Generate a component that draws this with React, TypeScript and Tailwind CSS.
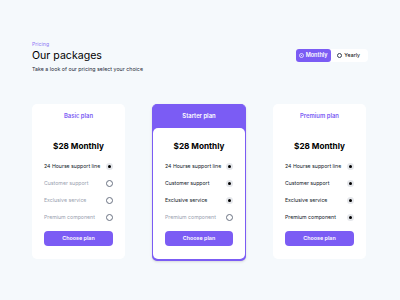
import React from "react";

type Plan = {
  name: string;
  active: boolean[];
  featured?: boolean;
};

const features = [
  "24 Hourse support line",
  "Customer support",
  "Exclusive service",
  "Premium component",
];

const plans: Plan[] = [
  { name: "Basic plan", active: [true, false, false, false] },
  { name: "Starter plan", active: [true, true, true, false], featured: true },
  { name: "Premium plan", active: [true, true, true, true] },
];

function Radio({ on }: { on: boolean }) {
  if (on) {
    return (
      <span className="shrink-0 w-[7px] h-[7px] rounded-full bg-gray-200 flex items-center justify-center">
        <span className="w-[3.5px] h-[3.5px] rounded-full bg-black" />
      </span>
    );
  }
  return <span className="shrink-0 w-[7px] h-[7px] rounded-full border border-gray-500 bg-white" />;
}

function PlanBody({ plan }: { plan: Plan }) {
  return (
    <div className="flex flex-col px-[11px] pt-[12px]">
      <div className="text-center text-[8.2px] font-bold text-black leading-[12px]">$28 Monthly</div>
      <div className="flex flex-col mt-[6px]">
        {features.map((f, i) => (
          <div key={f} className="h-[17px] flex items-center justify-between pl-[1px] pr-[1px]">
            <span className={`whitespace-nowrap text-[5.2px] ${plan.active[i] ? "text-gray-900" : "text-gray-400"}`}>
              {f}
            </span>
            <Radio on={plan.active[i]} />
          </div>
        ))}
      </div>
      <button className="mt-[5px] h-[14.5px] mx-[1px] rounded-[4px] bg-[#7b5cf4] text-white text-[5.4px] font-semibold">
        Choose plan
      </button>
    </div>
  );
}

export default function App() {
  return (
    <div className="w-[400px] h-[300px] bg-[#f5f9fc] font-['Inter',sans-serif] px-[32px] pt-[40px]">
      <div className="flex justify-between items-start">
        <div className="flex flex-col">
          <span className="text-[5.2px] text-[#8f78f5] leading-[8px]">Pricing</span>
          <span className="text-[10.6px] text-black leading-[14px] mt-[1px]">Our packages</span>
          <span className="text-[5.3px] text-gray-800 leading-[8px] mt-[2px]">
            Take a look of our pricing select your choice
          </span>
        </div>
        <div className="flex items-center bg-white rounded-[4px] mt-[9px]">
          <span className="flex items-center justify-center gap-[2px] h-[13px] w-[35px] rounded-[3px] bg-[#7b5cf4] text-white text-[5.5px] font-semibold">
            <span className="w-[4.5px] h-[4.5px] rounded-full border border-white/70 flex items-center justify-center">
              <span className="w-[1.5px] h-[1.5px] rounded-full bg-white" />
            </span>
            Monthly
          </span>
          <span className="flex items-center gap-[2px] pl-[6px] pr-[8px] text-[5.3px] text-black">
            <span className="w-[5.5px] h-[5.5px] rounded-full border border-gray-700" />
            Yearly
          </span>
        </div>
      </div>

      <div className="flex gap-[27px] mt-[31px]">
        {plans.map((p) =>
          p.featured ? (
            <div
              key={p.name}
              className="w-[94px] h-[157px] rounded-[5px] bg-[#7b5cf4] border border-[#7b5cf4] border-b-2 flex flex-col shadow-sm"
            >
              <div className="h-[23px] flex items-center justify-center text-white text-[5.9px] font-semibold">
                {p.name}
              </div>
              <div className="flex-1 bg-white rounded-[5px]">
                <PlanBody plan={p} />
              </div>
            </div>
          ) : (
            <div key={p.name} className="w-[93px] h-[155px] rounded-[5px] bg-white flex flex-col">
              <div className="h-[24px] flex items-center justify-center text-[#7b5cf4] text-[5.9px] font-semibold">
                {p.name}
              </div>
              <PlanBody plan={p} />
            </div>
          )
        )}
      </div>
    </div>
  );
}
